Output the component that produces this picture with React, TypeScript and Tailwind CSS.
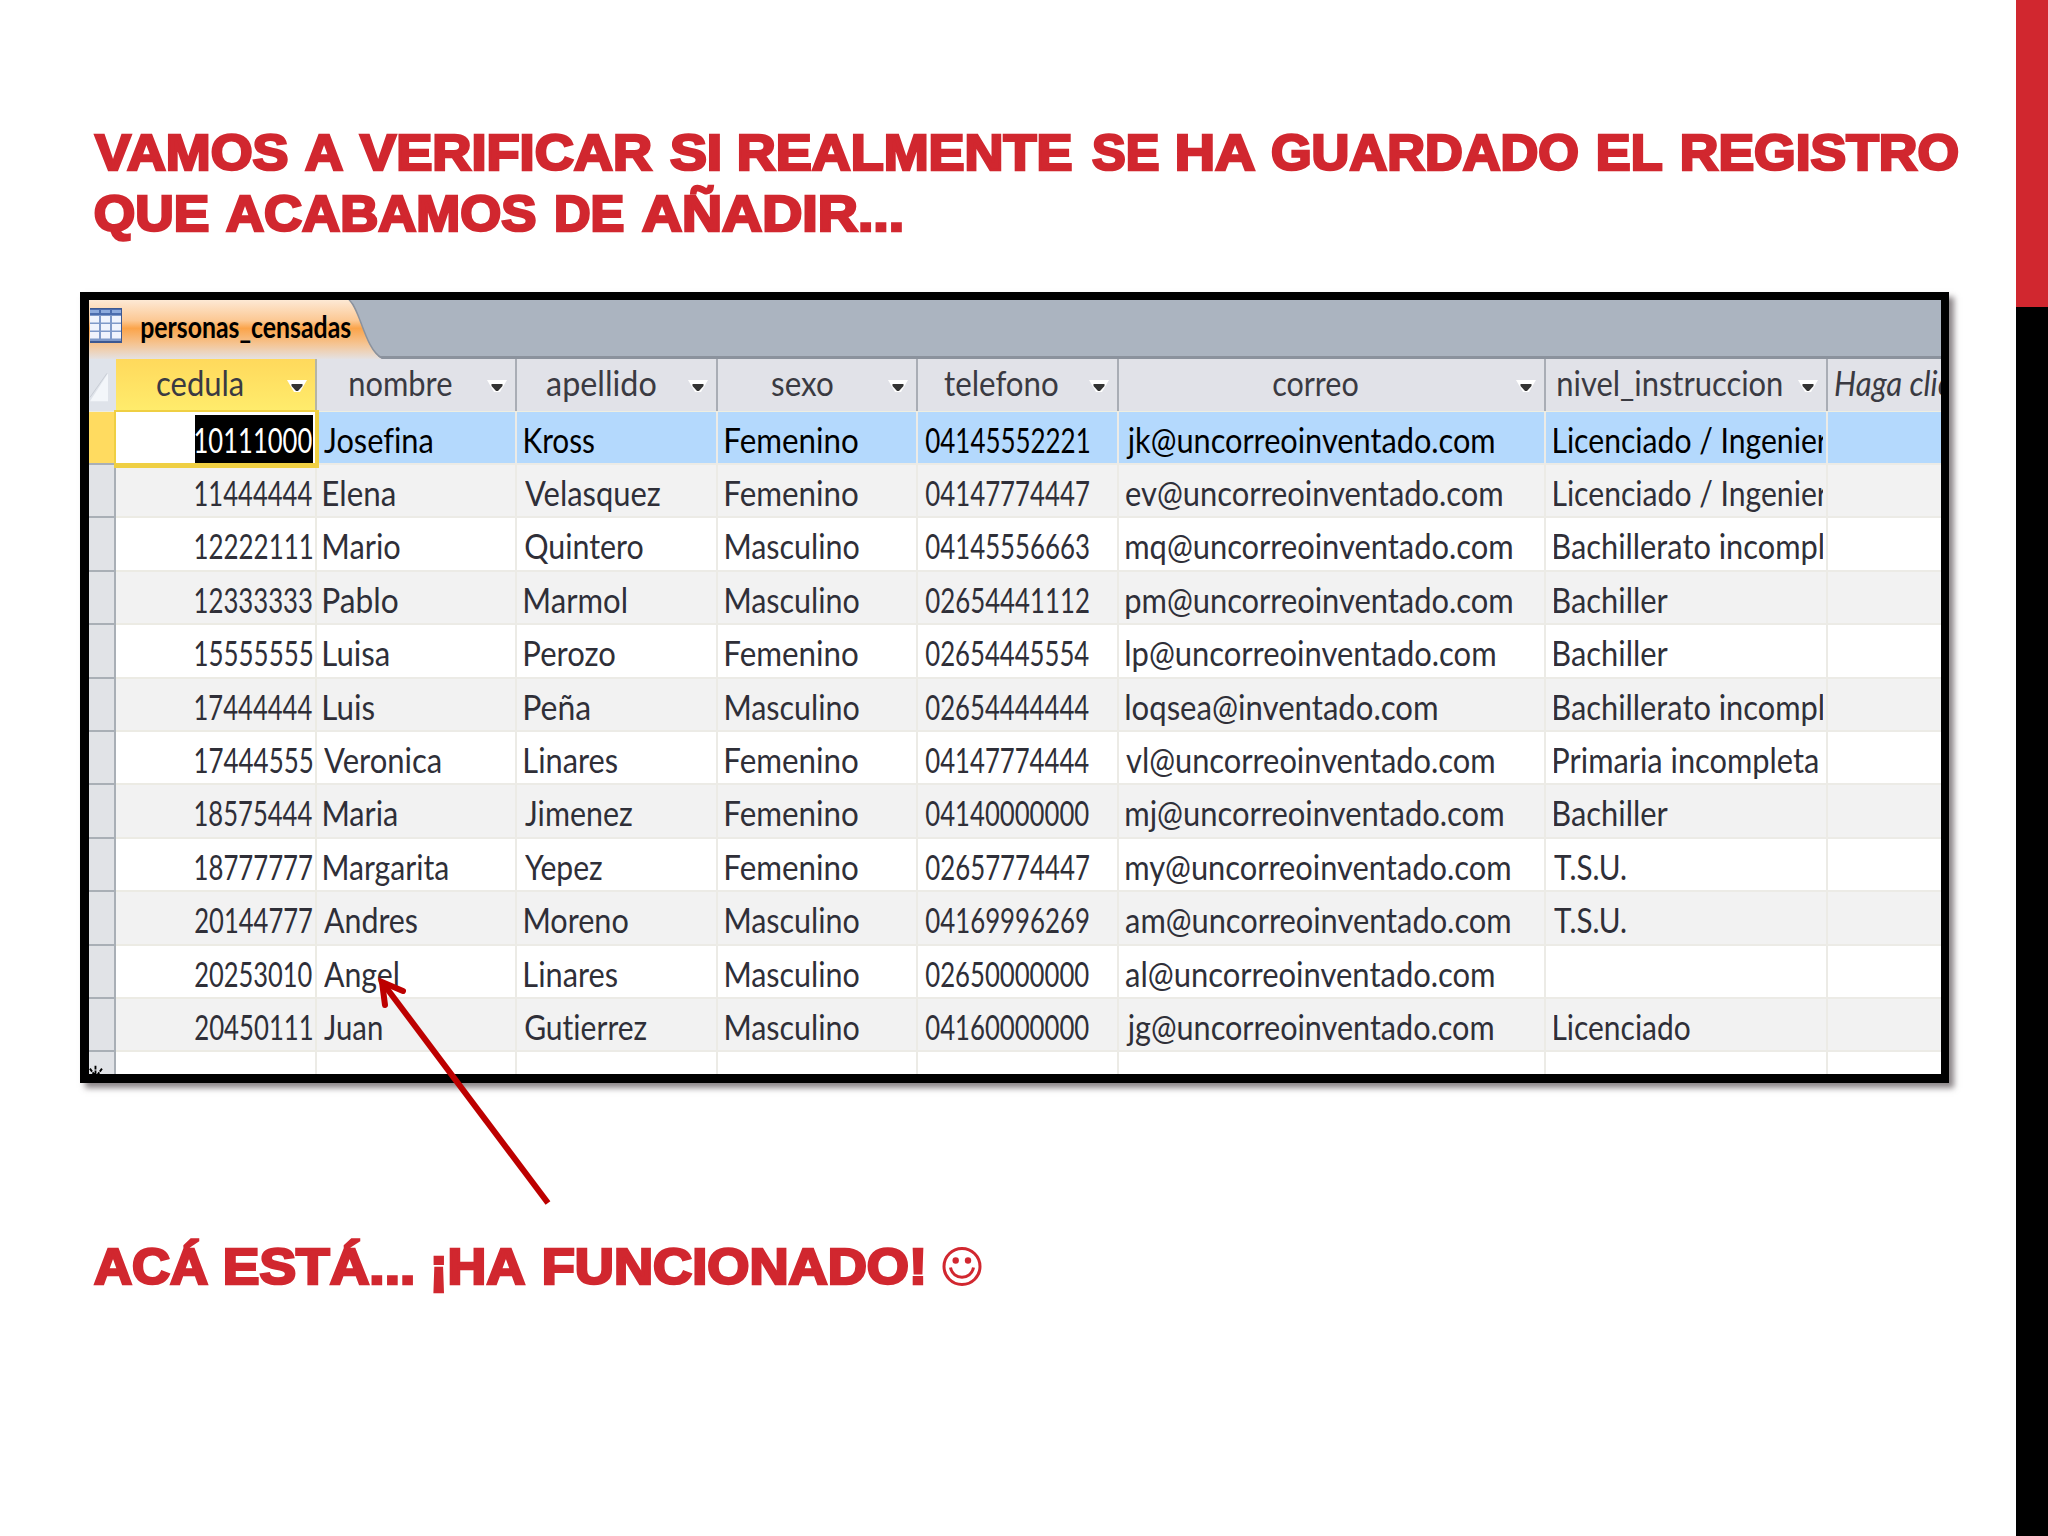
import { useLayoutEffect, useRef, useState } from "react";

type FitProps = { text: string; w: number; className?: string };

// Squeezes or stretches a run of text so that its ink is exactly w pixels wide.
function Fit({ text, w, className = "" }: FitProps) {
    const ref = useRef<HTMLSpanElement>(null);
    const [transform, setTransform] = useState("none");

    useLayoutEffect(() => {
        const ctx = document.createElement("canvas").getContext("2d");
        if (!ref.current || !ctx) return;
        const s = getComputedStyle(ref.current);
        ctx.font = `${s.fontStyle} ${s.fontWeight} ${s.fontSize} ${s.fontFamily}`;
        const m = ctx.measureText(text);
        const k = w / (m.actualBoundingBoxRight + m.actualBoundingBoxLeft);
        setTransform(`translateX(${m.actualBoundingBoxLeft * k}px) scaleX(${k})`);
    }, [text, w]);

    return (
        <span className={`inline-block shrink-0 ${className}`} style={{ width: w }}>
            <span ref={ref} className="inline-block origin-left whitespace-pre" style={{ transform }}>
                {text}
            </span>
        </span>
    );
}

const COLS = ["w-[201px]", "w-[200px]", "w-[201px]", "w-[200px]", "w-[201px]", "w-[427px]", "w-[282px]", "w-[113px]"];

const HEADERS: [string, number, string][] = [
    ["cedula", 86, "pl-[41px]"],
    ["nombre", 102, "pl-[33px]"],
    ["apellido", 109, "pl-[30px]"],
    ["sexo", 61, "pl-[54px]"],
    ["telefono", 114, "pl-[26px]"],
    ["correo", 85, "pl-[154px]"],
    ["nivel_instruccion", 224, "pl-[12px]"],
];

const F = ["Femenino", 132] as const;
const M = ["Masculino", 133] as const;

type Cell = readonly [string, number];

const ROWS: [string, ...Cell[]][] = [
    ["10111000", ["Josefina", 108], ["Kross", 69], F, ["04145552221", 163], ["jk@uncorreoinventado.com", 368], ["Licenciado / Ingenier", 274]],
    ["11444444", ["Elena", 71], ["Velasquez", 135], F, ["04147774447", 163], ["ev@uncorreoinventado.com", 376], ["Licenciado / Ingenier", 274]],
    ["12222111", ["Mario", 76], ["Quintero", 118], M, ["04145556663", 163], ["mq@uncorreoinventado.com", 386], ["Bachillerato incompl", 269]],
    ["12333333", ["Pablo", 74], ["Marmol", 101], M, ["02654441112", 163], ["pm@uncorreoinventado.com", 386], ["Bachiller", 114]],
    ["15555555", ["Luisa", 65], ["Perozo", 90], F, ["02654445554", 163], ["lp@uncorreoinventado.com", 369], ["Bachiller", 114]],
    ["17444444", ["Luis", 50], ["Peña", 65], M, ["02654444444", 163], ["loqsea@inventado.com", 311], ["Bachillerato incompl", 269]],
    ["17444555", ["Veronica", 117], ["Linares", 92], F, ["04147774444", 163], ["vl@uncorreoinventado.com", 368], ["Primaria incompleta", 264]],
    ["18575444", ["Maria", 73], ["Jimenez", 107], F, ["04140000000", 163], ["mj@uncorreoinventado.com", 377], ["Bachiller", 114]],
    ["18777777", ["Margarita", 124], ["Yepez", 77], F, ["02657774447", 163], ["my@uncorreoinventado.com", 384], ["T.S.U.", 72]],
    ["20144777", ["Andres", 93], ["Moreno", 103], M, ["04169996269", 163], ["am@uncorreoinventado.com", 384], ["T.S.U.", 72]],
    ["20253010", ["Angel", 74], ["Linares", 92], M, ["02650000000", 163], ["al@uncorreoinventado.com", 368], ["", 0]],
    ["20450111", ["Juan", 58], ["Gutierrez", 122], M, ["04160000000", 163], ["jg@uncorreoinventado.com", 367], ["Licenciado", 136]],
];

function Dropdown() {
    return (
        <svg className="absolute right-[7px] top-[20px] h-[14px] w-[22px]" viewBox="0 0 22 14">
            <path d="M1 1H21L14 13H8Z" fill="#fff" />
            <path d="M5.5 5H16.5V7L12 12H10L5.5 7Z" fill="#333" />
        </svg>
    );
}

function TabBar() {
    return (
        <div className="relative h-[59px] shrink-0 border-b-[3px] border-[#8b929d] bg-[#abb4c0]">
            <svg className="absolute left-0 top-0 h-[59px] w-[300px]" viewBox="0 0 300 59">
                <defs>
                    <linearGradient id="tab" x1="0" y1="0" x2="0" y2="1">
                        <stop offset="0" stopColor="#fde9d5" />
                        <stop offset="0.35" stopColor="#fcc893" />
                        <stop offset="0.48" stopColor="#fba44a" />
                        <stop offset="0.75" stopColor="#f5c594" />
                        <stop offset="1" stopColor="#e4e1e2" />
                    </linearGradient>
                </defs>
                <path d="M0 0H260C271 8 276 50 293 59H0Z" fill="url(#tab)" />
                <path d="M260 0C271 8 276 50 293 58" fill="none" stroke="#8b929d" strokeWidth="1.5" />
                <rect x="1" y="8" width="32" height="35" fill="#3c5891" />
                <rect x="1" y="9" width="31" height="32" fill="#7f99c9" />
                <rect x="1" y="9" width="31" height="6" fill="#4b6cae" />
                {[1, 12, 23].map(x => (
                    <g key={x}>
                        <rect x={x} y="10" width="9" height="3" fill="#8daadd" />
                        {[16, 24, 32].map(y => (
                            <rect key={y} x={x} y={y} width="9" height="6.5" fill="#f0f3fd" />
                        ))}
                    </g>
                ))}
            </svg>
            <div className="relative pl-[52px] pt-[9px] text-[30px] leading-[35px] font-bold text-black">
                <Fit text="personas_censadas" w={210} />
            </div>
        </div>
    );
}

function HeaderRow() {
    return (
        <div className="flex h-[52.6px] shrink-0 border-b border-[#eeeee0] bg-[#e1e2e8] text-[#3a3a42]">
            <div className="w-[27px] bg-[#dfe3ea]">
                <svg className="h-full w-full" viewBox="0 0 27 51">
                    <path d="M1 42L19 14V42Z" fill="#f3f6fa" />
                    <path d="M1 38L18 14" stroke="#c9ced6" />
                </svg>
            </div>
            {HEADERS.map(([name, w, pad], i) => (
                <div
                    key={name}
                    className={`relative border-r-2 pt-[3px] leading-[40px] ${COLS[i]} ${pad} ${
                        i === 0 ? "border-[#b5b5a5] bg-linear-to-b from-[#ffd95c] to-[#ffec6c]" : "border-[#a9adb5]"
                    }`}
                >
                    <Fit text={name} w={w} />
                    <Dropdown />
                </div>
            ))}
            <div className="w-[113px] overflow-hidden pl-[7px] pt-[3px] leading-[40px] italic">
                <Fit text="Haga clic" w={117} />
            </div>
        </div>
    );
}

function Row({ row, index }: { row: (typeof ROWS)[number]; index: number }) {
    const [cedula, ...cells] = row;
    const active = index === 0;
    const bg = active ? "bg-[#b4d9fd] text-black" : index % 2 ? "bg-[#f2f2f2] text-[#2f2f38]" : "bg-white text-[#2f2f38]";
    return (
        <div className={`flex h-[53.4px] shrink-0 leading-[40px] ${bg}`}>
            <div className={`w-[27px] border-b-2 border-r-2 border-[#a9afb6] ${active ? "bg-[#ffdb60]" : "bg-[#e1e3e7]"}`} />
            <div className={`relative flex justify-end border-b-2 border-r-2 border-[#ecebe4] pr-[3px] pt-[7px] ${COLS[0]}`}>
                {active && (
                    <div className="absolute -left-[2px] -top-[2px] z-10 h-[58px] w-[205px] border-2 border-b-[5px] border-r-4 border-[#efcf43] bg-white">
                        <div className="absolute right-[2px] top-[3px] h-[48px] w-[118px] bg-black" />
                    </div>
                )}
                <Fit text={cedula} w={117} className={active ? "relative z-20 text-white" : ""} />
            </div>
            {cells.map(([text, w], i) => (
                <div
                    key={i}
                    className={`border-b-2 border-r-2 border-[#ecebe6] pr-[3px] pt-[7px] ${i === 0 || i === 4 ? "pl-[7px]" : "pl-[8px]"} ${COLS[i + 1]}`}
                >
                    <div className={i === 5 ? "h-[43px] overflow-hidden" : ""}>{text && <Fit text={text} w={w} />}</div>
                </div>
            ))}
            <div className="w-[113px] border-b-2 border-[#ecebe6]" />
        </div>
    );
}

function NewRow() {
    return (
        <div className="flex h-[24px] shrink-0 bg-white">
            <div className="w-[27px] overflow-hidden border-r-2 border-[#a9afb6] bg-[#e1e3e7]">
                <svg className="h-full w-full" viewBox="0 0 27 24">
                    <path d="M7 14V24M1 17L6 24M14 17L9 24" stroke="#000" strokeWidth="2" strokeDasharray="4 1" />
                </svg>
            </div>
            {COLS.slice(0, 7).map((c, i) => (
                <div key={i} className={`border-r-2 border-[#ecebe6] ${c}`} />
            ))}
        </div>
    );
}

const TITLE: [string, number, string][][] = [
    [
        ["VAMOS", 195, ""],
        ["A", 39, "ml-[16px]"],
        ["VERIFICAR", 295, "ml-[15px]"],
        ["SI", 51, "ml-[16px]"],
        ["REALMENTE", 334, "ml-[18px]"],
        ["SE", 68, "ml-[19px]"],
        ["HA", 79, "ml-[17px]"],
        ["GUARDADO", 307, "ml-[16px]"],
        ["EL", 65, "ml-[19px]"],
        ["REGISTRO", 277, "ml-[19px]"],
    ],
    [
        ["QUE", 115, "ml-[1px]"],
        ["ACABAMOS", 311, "ml-[16px]"],
        ["DE", 69, "ml-[19px]"],
        ["AÑADIR...", 261, "ml-[17px]"],
    ],
];

const FOOTER: [string, number, string][] = [
    ["ACÁ", 115, ""],
    ["ESTÁ...", 189, "ml-[16px]"],
    ["¡HA", 93, "ml-[19px]"],
    ["FUNCIONADO!", 380, "ml-[18px]"],
];

// The outline makes the bold face black and adds 3px to every word's ink.
const Words = ({ words }: { words: [string, number, string][] }) => (
    <div className="flex text-[50px] leading-[61px] font-bold text-[#d1272f] font-['Liberation_Sans',Arial,sans-serif] [-webkit-text-stroke:2.6px_#d1272f]">
        {words.map(([text, w, gap]) => (
            <div key={text} className={gap}>
                <Fit text={text} w={w - 3} className="mx-[1.5px]" />
            </div>
        ))}
    </div>
);

export default function App() {
    return (
        <div className="relative flex h-[1536px] w-[2048px] overflow-hidden bg-white font-[Lato,sans-serif] [font-variant-ligatures:none]">
            <main className="flex-1 pt-[123px]">
                <h1 className="ml-[93px] h-[169px]">
                    {TITLE.map((words, i) => (
                        <Words key={i} words={words} />
                    ))}
                </h1>
                <section className="ml-[80px] flex h-[791px] w-[1869px] flex-col border-8 border-b-9 border-l-9 border-black bg-white text-[35px] shadow-[5px_5px_6px_rgba(60,50,55,0.6)]">
                    <div className="flex min-h-0 flex-1 flex-col overflow-hidden">
                        <TabBar />
                        <HeaderRow />
                        {ROWS.map((row, i) => (
                            <Row key={row[0]} row={row} index={i} />
                        ))}
                        <NewRow />
                    </div>
                </section>
                <h2 className="ml-[93px] mt-[154px] flex">
                    <Words words={FOOTER} />
                    <svg className="ml-[19px] mt-[10px] size-[40px]" viewBox="0 0 40 40">
                        <circle cx="20" cy="19.5" r="18" fill="none" stroke="#d1272f" strokeWidth="3" />
                        <circle cx="13.7" cy="13.5" r="3.2" fill="#d1272f" />
                        <circle cx="26" cy="13.5" r="3.2" fill="#d1272f" />
                        <path d="M8.5 20.5C11 33.5 29 33.5 31.5 20.5" fill="none" stroke="#d1272f" strokeWidth="3" />
                    </svg>
                </h2>
            </main>
            <aside className="w-8 bg-black">
                <div className="h-[307px] bg-[#d1272f]" />
            </aside>
            <svg className="absolute left-[370px] top-[970px] h-[240px] w-[190px]" viewBox="370 970 190 240" fill="none" stroke="#bd0000" strokeWidth="6">
                <path d="M382 982L548 1203" />
                <path d="M403 991L382 982L385 1005" strokeLinecap="round" />
            </svg>
        </div>
    );
}
